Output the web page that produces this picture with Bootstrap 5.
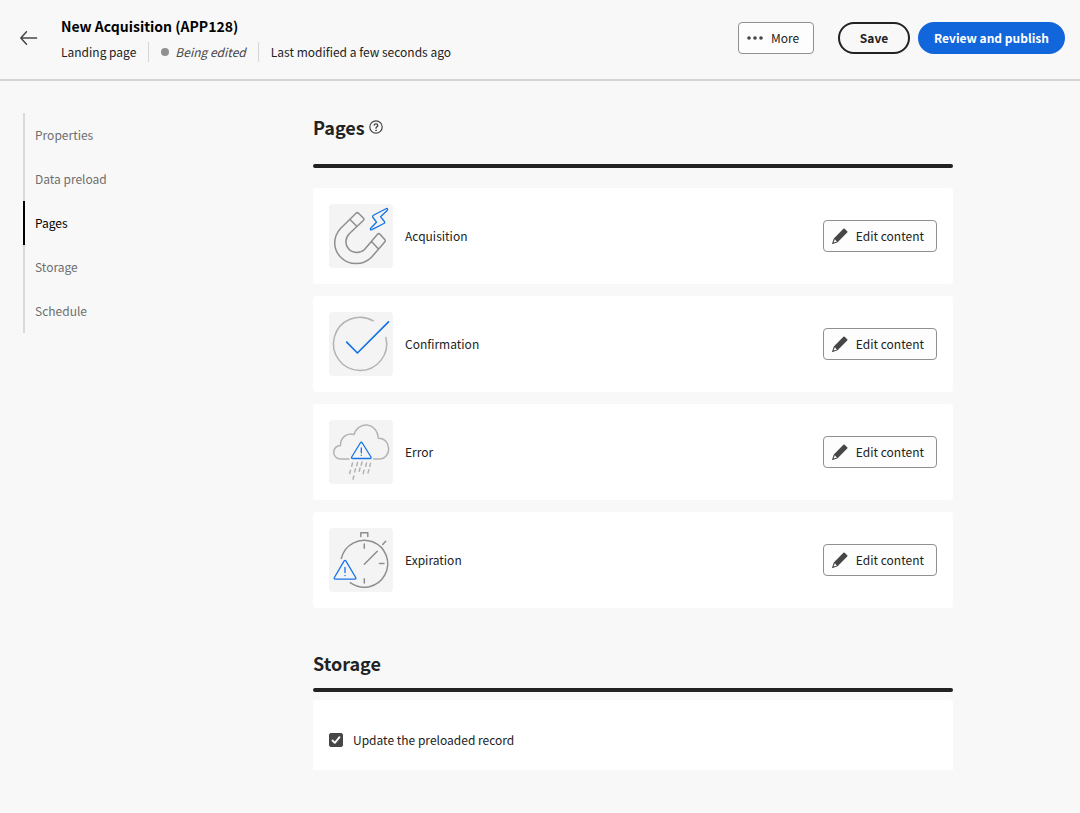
<!DOCTYPE html>
<html lang="en">
<head>
<meta charset="utf-8">
<meta name="viewport" content="width=device-width, initial-scale=1">
<title>New Acquisition (APP128)</title>
<link href="https://cdn.jsdelivr.net/npm/bootstrap@5.3.0/dist/css/bootstrap.min.css" rel="stylesheet">
<style>
  body { background: #f8f8f8; color: #222; font-family: "Noto Sans CJK SC", "Noto Sans", sans-serif; font-size: 12px; line-height: 20px; }
  .topbar { border-bottom: 2px solid #d5d5d5; padding: 14px 15px 17px 19px; }
  .back-link { color: #464646; margin-right: 22px; }
  .page-title { font-size: 14px; line-height: 24px; font-weight: 700; color: #000; margin: 0 0 4px; }
  .meta-item + .meta-item { border-left: 1px solid #d5d5d5; padding-left: 12px; margin-left: 12px; }
  .state { gap: 6px; }
  .state-dot { width: 8px; height: 8px; background: #909090; border-radius: 50%; }
  .state-text { color: #464646; font-style: italic; }
  .btn { font-size: 12px; line-height: 20px; height: 32px; padding: 5px 12px 5px 8px; }
  .btn-tool { --bs-btn-bg: #fdfdfd; --bs-btn-border-color: #909090; --bs-btn-color: #222; --bs-btn-hover-bg: #f0f0f0; --bs-btn-border-radius: 4px; min-width: 76px; }
  .btn-round { font-weight: 700; border-width: 2px; border-radius: 16px; padding: 3px 14px; }
  .btn-save { --bs-btn-color: #222; --bs-btn-border-color: #222; --bs-btn-hover-bg: #222; --bs-btn-hover-color: #fff; min-width: 72px; }
  .btn-publish { --bs-btn-color: #fff; --bs-btn-bg: #1266dc; --bs-btn-border-color: #1266dc; --bs-btn-hover-bg: #0d55bb; --bs-btn-hover-color: #fff; min-width: 147px; }
  .workspace { padding-left: 23px; }
  .side { flex: 0 0 290px; }
  .side .nav-link { color: #6e6e6e; border-left: 2px solid #dadada; padding: 12px 10px; }
  .side .nav-link.active { color: #000; border-color: #000; }
  .content { flex: 0 1 640px; padding-top: 8px; }
  .section-title { font-size: 18px; line-height: 28px; font-weight: 700; margin: 0; }
  .rule { height: 4px; border-radius: 2px; background: #222; }
  .pages-rule { margin: 23px 0 20px; }
  .storage-head { margin-top: 41px; }
  .storage-rule { margin: 11px 0 8px; }
  .page-list { gap: 12px; }
  .panel { background: #fff; border-radius: 4px; padding: 16px; }
  .thumb { width: 64px; height: 64px; border-radius: 4px; background: #f4f4f4; flex: none; }
  .storage-panel { padding: 30px 16px 20px; border-radius: 4px 4px 0 0; gap: 10px; }
  .form-check-input.preload { width: 14px; height: 14px; margin: 0; border-radius: 2px; float: none; }
  .form-check-input.preload:checked { background-color: #464646; border-color: #464646; background-image: url("data:image/svg+xml,%3Csvg xmlns='http://www.w3.org/2000/svg' viewBox='0 0 12 12'%3E%3Cpath d='M2.500 6.500 4.800 8.800 9.500 3.200' fill='none' stroke='%23fff' stroke-width='1.800' stroke-linecap='round' stroke-linejoin='round'/%3E%3C/svg%3E"); }
  svg { display: block; flex: none; fill: none; stroke-linecap: round; stroke-linejoin: round; }
</style>
</head>
<body>
<svg width="0" height="0" class="position-absolute" aria-hidden="true">
  <symbol id="pencil" viewBox="0 0 16 16">
    <path fill="#464646" d="M11.4 .8a.9.9 0 0 1 1.300 0l2.500 2.500a.9.9 0 0 1 0 1.300L5.600 14.200.7 16a.5.5 0 0 1-.6-.6L1.800 10.400zM2.800 11.200 1.500 14.600l3.400-1.200z"/>
  </symbol>
</svg>

<header class="topbar d-flex align-items-center">
  <a href="#" class="back-link" aria-label="Back">
    <svg width="20" height="18" viewBox="0 0 20 18" stroke="#464646" stroke-width="1.500"><path d="M17.500 9H2M7.500 2.800 1.800 9 7.500 15.200"/></svg>
  </a>
  <div class="me-auto">
    <h1 class="page-title">New Acquisition (APP128)</h1>
    <div class="d-flex align-items-center">
      <span class="meta-item">Landing page</span>
      <span class="meta-item state d-flex align-items-center"><span class="state-dot"></span><span class="state-text">Being edited</span></span>
      <span class="meta-item">Last modified a few seconds ago</span>
    </div>
  </div>
  <button type="button" class="btn btn-tool d-flex align-items-center gap-2 me-4">
    <svg width="16" height="16" viewBox="0 0 16 16"><g fill="#464646"><circle cx="2" cy="8" r="1.800"/><circle cx="8" cy="8" r="1.800"/><circle cx="14" cy="8" r="1.800"/></g></svg>
    More
  </button>
  <button type="button" class="btn btn-round btn-save me-2">Save</button>
  <button type="button" class="btn btn-round btn-publish">Review and publish</button>
</header>

<div class="workspace d-flex pt-4">
  <aside class="side pt-2">
    <nav class="nav flex-column" aria-label="Sections">
      <a class="nav-link" href="#">Properties</a>
      <a class="nav-link" href="#">Data preload</a>
      <a class="nav-link active" href="#pages" aria-current="true">Pages</a>
      <a class="nav-link" href="#storage">Storage</a>
      <a class="nav-link" href="#">Schedule</a>
    </nav>
  </aside>

  <main class="content pb-4">
    <section id="pages">
      <div class="d-flex align-items-center gap-1">
        <h2 class="section-title">Pages</h2>
        <svg width="14" height="14" viewBox="0 0 14 14" stroke="#464646" role="img" aria-label="Help"><circle cx="7" cy="7" r="6.200" stroke-width="1.200"/><path d="M5.200 5.200c.3-1.900 3.600-1.700 3.600.2C8.800 6.700 7 6.600 7 8.200" stroke-width="1.300"/><circle cx="7" cy="10.300" r=".4" fill="#464646" stroke-width=".8"/></svg>
      </div>
      <div class="rule pages-rule"></div>

      <div class="page-list d-flex flex-column">
        <div class="panel d-flex align-items-center">
          <div class="thumb">
            <svg width="64" height="64" viewBox="0 0 64 64" stroke="#8e8e8e" stroke-width="1.500">
              <path d="M27 9.200Q28.300 8 29.500 9.200L34.300 14Q35.500 15.200 34.300 16.500L20.500 29.500C16 34 15.800 40.500 19.500 44.800 23.500 49.400 31 49.700 35.500 45.500L48.500 30.200Q49.700 29 51 30.200L55.700 35.500Q56.800 36.700 55.700 38L42.500 53.200C34 61.500 20.500 61.800 12.300 53.800 3.800 45.800 3.500 33.500 11.500 24.500zM21 15.500l6.500 6.500M42.500 37.500l6.500 7"/>
              <path stroke="#1473e6" stroke-width="1.300" d="M57.500 4.500 44.800 11Q43 12 44 13.500L47.500 18.200 41.500 24.500Q40.800 26.200 43 25.700L54.800 19.500Q56.500 18.500 55 17L51.500 12.700 58.200 6.500Q59.200 4.500 57.500 4.500z"/>
            </svg>
          </div>
          <span class="ms-2 ps-1 me-auto">Acquisition</span>
          <button type="button" class="btn btn-tool d-flex align-items-center gap-2"><svg width="16" height="16"><use href="#pencil"/></svg>Edit content</button>
        </div>

        <div class="panel d-flex align-items-center">
          <div class="thumb">
            <svg width="64" height="64" viewBox="0 0 64 64" stroke="#b3b3b3" stroke-width="1.500">
              <path d="M44.300 8.800A26.600 26.600 0 1 0 56.900 25.500"/>
              <path stroke="#1473e6" stroke-width="1.700" d="M17.700 30.200 28.400 41 59.500 9.900"/>
            </svg>
          </div>
          <span class="ms-2 ps-1 me-auto">Confirmation</span>
          <button type="button" class="btn btn-tool d-flex align-items-center gap-2"><svg width="16" height="16"><use href="#pencil"/></svg>Edit content</button>
        </div>

        <div class="panel d-flex align-items-center">
          <div class="thumb">
            <svg width="64" height="64" viewBox="0 0 64 64" stroke="#b3b3b3" stroke-width="1.500">
              <path d="M20 39H11.500A6.800 6.800 0 0 1 11.500 25.400C11.300 18 17.500 12.500 25 14.500 29 1 48 1.500 49.300 18.300 63 18.300 63 39 50 39H44.500"/>
              <path stroke="#1473e6" stroke-width="1.300" d="M31.300 23Q32.300 21.500 33.300 23L42 37Q42.600 38.500 41 38.500H23.700Q22 38.500 22.700 37zM32.300 28v4.800M32.300 35.100v.2"/>
              <path d="M23.500 43l-.8 3.200M28.500 42.500l-.8 3.200M33 42l-.8 3.200M37.500 43l-.8 3.200M41.500 43.200l-.8 3.200M21.500 50.300l-.8 3.200M26.500 48.700l-.8 3.200M31 48l-.8 3.200M35 50.300l-.8 3.200M39.800 49.700l-.8 3.200M24.800 56l-.8 3.200"/>
            </svg>
          </div>
          <span class="ms-2 ps-1 me-auto">Error</span>
          <button type="button" class="btn btn-tool d-flex align-items-center gap-2"><svg width="16" height="16"><use href="#pencil"/></svg>Edit content</button>
        </div>

        <div class="panel d-flex align-items-center">
          <div class="thumb">
            <svg width="64" height="64" viewBox="0 0 64 64" stroke="#8e8e8e" stroke-width="1.500">
              <path d="M12.300 30.500A23.500 23.500 0 1 1 21.300 54.700M31.800 8.500V4.800h7V8.500M53.700 16.500l3-3.200M35.300 36.200 48.300 23.300M35.300 16v4.300M35.300 50.700v4.300M50.500 35.400H55"/>
              <path stroke="#1473e6" stroke-width="1.300" d="M15 33.200Q16 31.500 17 33.200L26.700 49.500Q27.500 51.200 25.800 51.200H6.300Q4.600 51.200 5.400 49.500zM16 39.500v5M16 47.300v.3"/>
            </svg>
          </div>
          <span class="ms-2 ps-1 me-auto">Expiration</span>
          <button type="button" class="btn btn-tool d-flex align-items-center gap-2"><svg width="16" height="16"><use href="#pencil"/></svg>Edit content</button>
        </div>
      </div>
    </section>

    <section id="storage" class="storage-head">
      <h2 class="section-title">Storage</h2>
      <div class="rule storage-rule"></div>
      <div class="panel storage-panel d-flex align-items-center">
        <input class="form-check-input preload" type="checkbox" id="preload" checked>
        <label for="preload">Update the preloaded record</label>
      </div>
    </section>
  </main>
</div>
<script src="https://cdn.jsdelivr.net/npm/bootstrap@5.3.0/dist/js/bootstrap.bundle.min.js"></script>
</body>
</html>
